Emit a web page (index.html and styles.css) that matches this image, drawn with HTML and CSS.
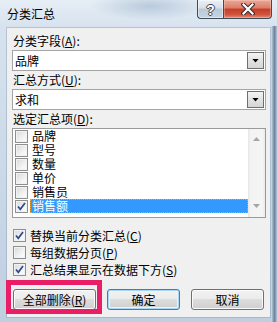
FILE: index.html
```html
<!DOCTYPE html>
<html lang="zh-CN">
<head>
<meta charset="utf-8">
<title>分类汇总</title>
<link rel="stylesheet" href="styles.css">
</head>
<body>
<div class="window">
  <div class="titlebar">
    <span class="title">分类汇总</span>
    <div class="caption-buttons">
      <div class="cap-btn help"><span class="q">?</span></div>
      <div class="cap-btn close">
        <svg width="14" height="12" viewBox="0 0 14 12">
          <path d="M2.5 1.5 L11.5 10.5 M11.5 1.5 L2.5 10.5" stroke="#3b2a28" stroke-width="4.2" stroke-linecap="square" fill="none"/>
          <path d="M2.5 1.5 L11.5 10.5 M11.5 1.5 L2.5 10.5" stroke="#ffffff" stroke-width="2.2" stroke-linecap="square" fill="none"/>
        </svg>
      </div>
    </div>
  </div>
  <div class="client">
    <div class="label">分类字段(<u>A</u>):</div>
    <div class="combo"><span class="combo-text">品牌</span><span class="drop"><i class="arrow"></i></span></div>
    <div class="label">汇总方式(<u>U</u>):</div>
    <div class="combo"><span class="combo-text">求和</span><span class="drop"><i class="arrow"></i></span></div>
    <div class="label">选定汇总项(<u>D</u>):</div>
    <div class="listbox">
      <div class="items">
        <div class="item"><span class="cb"></span><span class="txt">品牌</span></div>
        <div class="item"><span class="cb"></span><span class="txt">型号</span></div>
        <div class="item"><span class="cb"></span><span class="txt">数量</span></div>
        <div class="item"><span class="cb"></span><span class="txt">单价</span></div>
        <div class="item"><span class="cb"></span><span class="txt">销售员</span></div>
        <div class="item selected"><span class="cb"><svg class="tick" width="11" height="11" viewBox="0 0 11 11"><path d="M2 5.5 L4.3 8.3 L9 2" stroke="#2f4a8c" stroke-width="1.7" fill="none"/></svg></span><span class="txt">销售额</span></div>
      </div>
      <div class="scrollbar"><i class="sb-up"></i><i class="sb-down"></i></div>
    </div>
    <div class="options">
      <div class="opt"><span class="cb"><svg class="tick" width="11" height="11" viewBox="0 0 11 11"><path d="M2 5.5 L4.3 8.3 L9 2" stroke="#2f4a8c" stroke-width="1.7" fill="none"/></svg></span><span class="opt-txt">替换当前分类汇总(<u>C</u>)</span></div>
      <div class="opt"><span class="cb"></span><span class="opt-txt">每组数据分页(<u>P</u>)</span></div>
      <div class="opt"><span class="cb"><svg class="tick" width="11" height="11" viewBox="0 0 11 11"><path d="M2 5.5 L4.3 8.3 L9 2" stroke="#2f4a8c" stroke-width="1.7" fill="none"/></svg></span><span class="opt-txt">汇总结果显示在数据下方(<u>S</u>)</span></div>
    </div>
    <div class="buttons">
      <div class="btn wide">全部删除(<u>R</u>)</div>
      <div class="btn default">确定</div>
      <div class="btn">取消</div>
    </div>
  </div>
</div>
<div class="highlight"></div>
</body>
</html>
```
FILE: styles.css
```css
* { box-sizing: border-box; }
html, body { margin: 0; padding: 0; }
body {
  width: 277px;
  height: 322px;
  overflow: hidden;
  position: relative;
  font-family: "Noto Sans CJK SC", "Noto Sans", sans-serif;
  font-size: 12px;
  color: #000;
  background:
    linear-gradient(to right, #d8e3ee 0, #8ea3ba 35%, #6c849e 60%, #b4c6d8 100%) no-repeat 271px 26px / 6px 296px,
    radial-gradient(ellipse 60px 14px at 150px 6px, rgba(150,175,200,0.55), rgba(150,175,200,0)),
    linear-gradient(#e6eef6 0, #d6e2ee 28px, #c9d8e7 60%, #bfcfe0 100%);
}
u { text-decoration: underline; text-underline-offset: 1px; }

.window {
  height: 322px;
  display: flex;
  flex-direction: column;
}
.titlebar {
  height: 28px;
  flex: none;
  display: flex;
  align-items: flex-start;
}
.title {
  padding: 7px 0 0 7px;
  line-height: 14px;
  color: #000;
}
.caption-buttons {
  margin-left: auto;
  margin-right: 5px;
  display: flex;
}
.cap-btn {
  height: 19px;
  border: 1px solid #3e4b5b;
  border-top: none;
  display: flex;
  align-items: center;
  justify-content: center;
}
.help {
  width: 26px;
  border-right: none;
  border-bottom-left-radius: 4px;
  background: linear-gradient(#e9eff5 0, #d6e0ea 45%, #b9c9d9 50%, #c6d4e2 100%);
  box-shadow: inset 0 0 0 1px rgba(255,255,255,0.45);
}
.q {
  font-family: "Liberation Sans", sans-serif;
  font-weight: bold;
  font-size: 14px;
  line-height: 14px;
  color: #fff;
  text-shadow: 1px 0 #3a4350, -1px 0 #3a4350, 0 1px #3a4350, 0 -1px #3a4350;
  margin-top: 1px;
}
.close {
  width: 49px;
  border-bottom-right-radius: 4px;
  background: linear-gradient(#eaa999 0, #dc7b66 45%, #c63d25 50%, #cf533b 80%, #e28c76 100%);
  box-shadow: inset 0 0 0 1px rgba(255,220,210,0.35);
}
.close svg { display: block; }

.client {
  flex: 1;
  margin: 0 7px 5px 7px;
  background: #f0f0f0;
  padding: 4px 4px 0 5px;
  box-shadow: 0 0 0 1px rgba(120,140,165,0.35);
  display: flex;
  flex-direction: column;
}
.label {
  height: 18px;
  line-height: 18px;
  padding-left: 1px;
  white-space: nowrap;
}
.combo {
  height: 21px;
  border: 1px solid #a5a5a5;
  background: #fff;
  display: flex;
  align-items: stretch;
  padding: 1px 1px 1px 0;
}
.combo-text {
  flex: 1;
  padding-left: 2px;
  line-height: 17px;
}
.drop {
  width: 17px;
  border: 1px solid #6f6f6f;
  background: linear-gradient(#f4f4f4, #e2e2e2 50%, #d6d6d6);
  display: flex;
  align-items: center;
  justify-content: center;
}
.arrow {
  width: 7px;
  height: 4px;
  background: #000;
  clip-path: polygon(0 0, 100% 0, 50% 100%);
}

.listbox {
  height: 90px;
  border: 1px solid #9a9a9a;
  background: #fff;
  display: flex;
}
.items {
  flex: 1;
  display: flex;
  flex-direction: column;
}
.item {
  height: 14px;
  display: flex;
  align-items: center;
}
.cb {
  width: 13px;
  height: 13px;
  flex: none;
  border: 1px solid #8e8f8f;
  background: linear-gradient(135deg, #d8d8d8, #f6f6f6 70%, #fbfbfb);
  box-shadow: inset 0 0 0 1px #f2f2f2;
  display: flex;
  align-items: center;
  justify-content: center;
}
.item .cb { margin-left: 2px; }
.tick { display: block; }
.txt {
  flex: 1;
  margin-left: 2px;
  padding-left: 2px;
  height: 14px;
  line-height: 14px;
}
.selected .txt {
  background: #3399ff;
  color: #fff;
  outline: 1px dotted #e8a03a;
  outline-offset: -1px;
}
.scrollbar {
  width: 17px;
  flex: none;
  background: linear-gradient(to right, #e6e6e6 0, #f3f3f3 15%, #f5f5f5 85%, #e9e9e9 100%);
  display: flex;
  flex-direction: column;
  justify-content: space-between;
  align-items: center;
  padding: 8px 0 9px;
}
.sb-up, .sb-down {
  width: 7px;
  height: 4px;
  background: #a6a6a6;
}
.sb-up { clip-path: polygon(50% 0, 100% 100%, 0 100%); }
.sb-down { clip-path: polygon(0 0, 100% 0, 50% 100%); }

.options {
  margin-top: 9px;
  display: flex;
  flex-direction: column;
}
.opt {
  height: 17px;
  display: flex;
  align-items: center;
}
.opt .cb { margin-left: 1px; }
.opt-txt {
  margin-left: 4px;
  line-height: 17px;
  white-space: nowrap;
}

.buttons {
  margin-top: 11px;
  padding-left: 1px;
  display: flex;
  gap: 11px;
}
.btn {
  width: 73px;
  height: 21px;
  border: 1px solid #707070;
  border-radius: 3px;
  background: linear-gradient(#f2f2f2 0, #ebebeb 50%, #dddddd 50%, #cfcfcf 100%);
  box-shadow: inset 0 0 0 1px #fafafa;
  text-align: center;
  line-height: 19px;
  white-space: nowrap;
}
.btn.wide { width: 83px; }
.btn.default {
  border-color: #3c7fb1;
  box-shadow: inset 0 0 0 1px #a6d8f5, inset 0 0 0 2px #e6f4fc;
}

.highlight {
  position: absolute;
  left: 6px;
  top: 280px;
  width: 96px;
  height: 34px;
  border: 5px solid #ea1e66;
}
```
